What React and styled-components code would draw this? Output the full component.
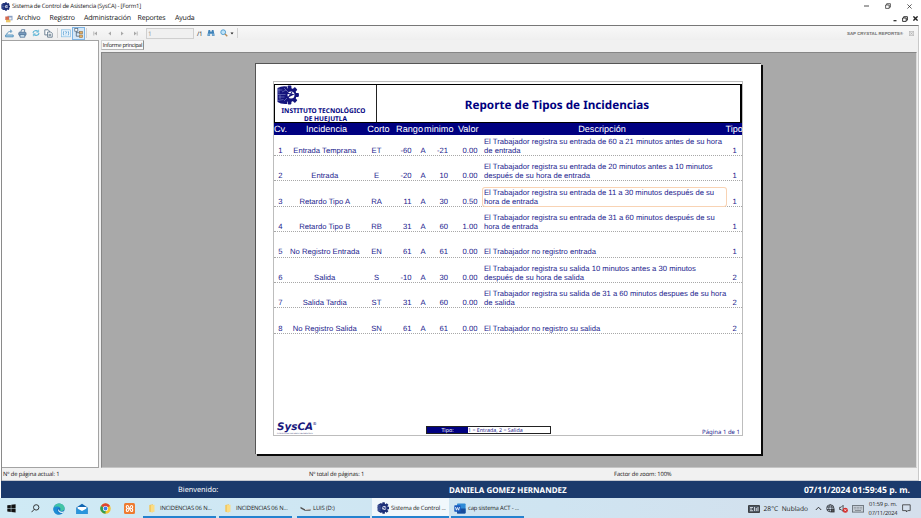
import React from "react";
import styled, { createGlobalStyle } from "styled-components";

const SEGOE = '"Open Sans", "Noto Sans", sans-serif';
const TAHOMA = '"Noto Sans", "DejaVu Sans", sans-serif';
const ARIAL = '"Liberation Sans", Arial, sans-serif';

const Global = createGlobalStyle`
  *, *::before, *::after { box-sizing: border-box; }
  body { margin: 0; overflow: hidden; background: #fff; }
  svg { display: block; flex: none; }
`;

const Screen = styled.div`
  width: 921px;
  height: 518px;
  display: flex;
  flex-direction: column;
  background: #fff;
  font-family: ${SEGOE};
  font-size: 6.6px;
  color: #222;
  white-space: nowrap;
  overflow: hidden;
  text-rendering: geometricPrecision;
`;

const Text = styled.span`
  font-family: ${(p) => p.$font || "inherit"};
  font-size: ${(p) => p.$size || 6.6}px;
  font-weight: ${(p) => (p.$bold ? 700 : 400)};
  letter-spacing: ${(p) => p.$track || 0}px;
  color: ${(p) => p.$color || "inherit"};
  white-space: nowrap;
`;

/* ---------- window chrome ---------- */
const TitleBar = styled.header`
  height: 12px;
  flex: none;
  display: flex;
  align-items: center;
  padding: 0 9px 0 1px;
  gap: 2px;
`;
const WindowButtons = styled.div`
  margin-left: auto;
  display: flex;
  align-items: center;
  gap: ${(p) => p.$gap}px;
`;
const MenuBar = styled.nav`
  height: 13px;
  flex: none;
  display: flex;
  align-items: center;
  padding: 0 3px 0 5px;
`;
const MenuItem = styled.span`
  font-size: 7px;
  letter-spacing: -0.17px;
  color: #111;
  width: ${(p) => p.$width}px;
  &:first-of-type { margin-left: 4px; }
`;
const Client = styled.main`
  height: 456px;
  flex: none;
  display: flex;
  flex-direction: column;
  margin: 0 2px 0 1px;
  border-top: 1px solid #777;
  border-left: 1px solid #8a8a8a;
  border-right: 1px solid #c9c9c9;
  background: #f1f1f1;
`;
const Toolbar = styled.div`
  height: 14px;
  flex: none;
  display: flex;
  align-items: center;
  padding: 0 4px 0 1px;
  background: linear-gradient(#f8f8f8, #efefef);
`;
const ToolButton = styled.span`
  width: ${(p) => p.$width || 13}px;
  height: 13px;
  flex: none;
  display: flex;
  align-items: center;
  justify-content: center;
  border: 1px solid ${(p) => (p.$on ? "#7db3e3" : "transparent")};
  background: ${(p) => (p.$on ? "#d5e8f8" : "transparent")};
`;
const Separator = styled.span`
  width: 1px;
  height: 10px;
  margin: 0 ${(p) => p.$gap || 0}px;
  background: #d2d2d2;
`;
const PageInput = styled.span`
  width: 48px;
  height: 11px;
  margin: 0 3px 0 4px;
  padding-left: 1px;
  border: 1px solid #cfcfcf;
  background: #f0f0f0;
  color: #8d8d8d;
  font-size: 6.4px;
  line-height: 9px;
`;
const Brand = styled.div`
  margin-left: auto;
  display: flex;
  align-items: center;
  gap: 6px;
`;
const Workspace = styled.div`
  height: 428px;
  flex: none;
  display: flex;
  gap: 2px;
`;
const TreePanel = styled.aside`
  width: 97px;
  background: #fff;
  border: 1px solid #a3a3a3;
  border-left: 0;
`;
const Viewer = styled.section`
  flex: 1;
  display: flex;
  flex-direction: column;
  padding-right: 1px;
`;
const Tabs = styled.div`
  height: 12px;
  display: flex;
  align-items: flex-start;
`;
const Tab = styled.div`
  width: 43px;
  height: 10px;
  display: flex;
  align-items: center;
  justify-content: center;
  border: 1px solid #d6d6d6;
  border-right-color: #8e8e8e;
  border-bottom-color: #b5b5b5;
  background: #fafafa;
  color: #111;
`;
const Canvas = styled.div`
  flex: 1;
  padding: 10px 0 0 153px;
  background: #a9a9a9;
  border-top: 1px solid #868686;
  border-left: 1px solid #868686;
  border-right: 1px solid #dcdcdc;
  border-bottom: 1px solid #c5c5c5;
`;
const StatusBar = styled.footer`
  flex: 1;
  display: flex;
  align-items: center;
  padding-left: 1px;
  border-bottom: 1px solid #c4c8d0;
  color: #111;
`;
const StatusCell = styled.span`
  width: ${(p) => p.$width}px;
  font-size: 5.8px;
  letter-spacing: -0.1px;
  line-height: 8px;
`;

/* ---------- report page ---------- */
const Sheet = styled.article`
  width: 506px;
  height: 391px;
  padding: 17px 0 0 17px;
  background: #fff;
  border: 1px solid #555;
  border-width: 1px 0 0 1px;
  box-shadow: 2px 2px 0 #0a0a0a;
  font-family: ${ARIAL};
  color: #23238e;
`;
const Frame = styled.div`
  width: 470px;
  height: 355px;
  display: flex;
  flex-direction: column;
  padding-top: 2px;
  border: 1px solid #bdbdbd;
`;
const Masthead = styled.div`
  height: 39px;
  flex: none;
  display: flex;
  border: 1px solid #000;
  border-right-width: 2px;
`;
const Institute = styled.div`
  width: 102px;
  display: flex;
  flex-direction: column;
  align-items: center;
  border-right: 1px solid #222;
  color: #000080;
`;
const LogoSlot = styled.div`
  height: 21px;
  align-self: flex-start;
  padding-left: 1px;
`;
const InstituteLine = styled.div`
  height: 8px;
  padding: 0 ${(p) => p.$trail}px 0 0;
  font: 700 6.5px/9px ${TAHOMA};
`;
const ReportTitle = styled.h1`
  flex: 1;
  margin: 0;
  padding: 2px 3px 0 0;
  display: flex;
  align-items: center;
  justify-content: center;
  font: 700 11.7px/12px ${TAHOMA};
  color: #000080;
`;
const HeadRow = styled.div`
  height: 12px;
  flex: none;
  display: grid;
  grid-template-columns: 13px 79px 25px 32px 30.5px 25px 247px 1fr;
  align-items: center;
  background: #000080;
  color: #fff;
  font-size: 9.15px;
  line-height: 11px;
`;
const HeadCell = styled.span`
  text-align: ${(p) => p.$align || "center"};
`;
const Row = styled.div`
  height: ${(p) => (p.$first ? 21 : 25.4)}px;
  flex: none;
  display: grid;
  grid-template-columns: 13px 75.5px 28px 21px 23px 13.5px 29.5px 250px 14.5px;
  align-items: end;
  margin-right: 0;
  padding-bottom: 0.2px;
  border-bottom: 1px dotted #a8a8a8;
  font-size: 7.67px;
  line-height: 9px;
`;
const Cell = styled.span`
  text-align: ${(p) => p.$align || "center"};
`;
const Description = styled.span`
  margin: 0 2px 0 5.5px;
  padding-left: 1px;
  border-radius: 2px;
  white-space: pre;
  box-shadow: ${(p) => (p.$marked ? "0 0 0 1px #f8d3b4" : "none")};
`;
const SheetFooter = styled.div`
  margin-top: auto;
  height: 14px;
  display: flex;
  align-items: flex-start;
  padding: 0 2px 0 3px;
  font-family: ${TAHOMA};
`;
const SysBrand = styled.div`
  width: 149px;
  height: 14px;
  display: flex;
  flex-direction: column;
  justify-content: flex-end;
`;
const SysName = styled.div`
  display: flex;
  height: 11px;
  font: italic 700 10.4px/11px "DejaVu Sans", sans-serif;
  color: #17177c;
`;
const Registered = styled.span`
  font: 400 4px/5px ${TAHOMA};
`;
const SysTag = styled.div`
  font: 400 1.9px/2px ${TAHOMA};
  color: #333366;
`;
const Legend = styled.div`
  width: 125px;
  height: 8px;
  margin-top: 5px;
  display: flex;
  border: 1px solid #222;
  font-size: 5.3px;
  line-height: 6px;
`;
const LegendKey = styled.span`
  width: 41px;
  background: #000080;
  color: #fff;
  text-align: center;
`;
const PageNumber = styled.div`
  margin: 6.5px 0 0 auto;
  font-size: 6px;
  line-height: 9px;
`;

/* ---------- welcome bar and taskbar ---------- */
const WelcomeBar = styled.div`
  height: 17px;
  flex: none;
  display: grid;
  grid-template-columns: 177px 271px 1fr auto;
  align-items: center;
  margin-left: 1px;
  padding: 1px 11px 0 0;
  background: #1b3a6c;
  color: #fff;
  font-family: ${TAHOMA};
`;
const Taskbar = styled.div`
  height: 20px;
  flex: none;
  display: flex;
  padding-left: 1px;
  background: linear-gradient(90deg, #cfeaf5, #cfe4f1 60%, #d5dfec);
  color: #222;
`;
const Pinned = styled.div`
  width: 142px;
  display: flex;
  align-items: center;
  padding: 1px 0 0 6px;
`;
const PinnedIcon = styled.span`
  width: ${(p) => p.$width}px;
`;
const Task = styled.div`
  width: ${(p) => p.$width || 73}px;
  margin-right: ${(p) => p.$gap}px;
  display: flex;
  align-items: center;
  gap: ${(p) => p.$space}px;
  padding: 2px 0 0 ${(p) => p.$pad}px;
  border-bottom: 2px solid #2482cf;
  background: ${(p) => (p.$active ? "#f1f8fc" : "transparent")};
`;
const TaskLabel = styled.span`
  font-size: 5.9px;
  letter-spacing: -0.16px;
`;
const Tray = styled.div`
  margin-left: auto;
  display: flex;
  align-items: center;
  padding: 1px 10px 0 0;
  gap: 4px;
`;
const Weather = styled.div`
  display: flex;
  align-items: center;
  gap: 3.5px;
  margin-right: 3px;
`;
const Clock = styled.div`
  width: 30px;
  text-align: center;
  font-size: 5.7px;
  line-height: 8.3px;
  letter-spacing: -0.12px;
`;

/* ---------- drawings ---------- */
const teeth = [0, 45, 90, 135, 180, 225, 270, 315];
const Gear = ({ size, color = "#1c2f77" }) => (
  <svg width={size} height={size} viewBox="0 0 20 20">
    <g fill={color}>
      <circle cx="11" cy="10" r="7" />
      {teeth.map((a) => (
        <rect key={a} x="8.8" y="0.6" width="4.4" height="4" rx=".8" transform={`rotate(${a} 11 10)`} />
      ))}
      <path d="M1 5Q4 2 9 2v16Q4 18 1 15z" />
    </g>
    <circle cx="12" cy="10" r="3.4" fill="#e8edf8" />
    <path d="M9.5 8.8l5 1.2-4 2" stroke={color} strokeWidth="1.3" fill="none" />
    <path d="M1 6.500h5M1 10h6M1 13.500h5" stroke="#8b9ad0" strokeWidth=".9" />
  </svg>
);
const InstituteLogo = () => (
  <svg width="23" height="20" viewBox="0 0 23 20">
    <g fill="#14147c">
      <circle cx="13.5" cy="10" r="7" />
      {teeth.map((a) => (
        <rect key={a} x="11.6" y="0.6" width="3.8" height="4" rx=".8" transform={`rotate(${a} 13.5 10)`} />
      ))}
      <path d="M1.5 3Q6 .5 11 1.5v17.500Q5 19.500 1.500 17z" />
    </g>
    <circle cx="15" cy="10" r="3.5" fill="#fff" />
    <path d="M10 8l7 1.5-6 3M12 13l4-6" stroke="#14147c" strokeWidth="1.1" fill="none" />
    <path d="M1.500 5h5M3 3.500v5M6 7l4-2M1.500 9.500h8M2.500 12h6M4 10v4M1.500 15.500l6-1M8 3l4 4M8 16l3-3" stroke="#9aa2d8" strokeWidth=".5" fill="none" />
  </svg>
);
const Minimize = ({ bold }) => (
  <svg width="5" height="8" viewBox="0 0 5 8"><path d={bold ? "M1.5 5.7h3" : "M0 4h5"} stroke="#222" strokeWidth={bold ? 1.2 : 0.8} /></svg>
);
const Restore = ({ bold }) => (
  <svg width="6" height="6" viewBox="0 0 6 6" fill="none" stroke="#222" strokeWidth={bold ? 0.9 : 0.7}>
    <path d="M.6 2h3.6v3.4H.6zM1.7 2V.7h3.7v3.5H4.2" />
  </svg>
);
const Close = ({ bold }) => (
  <svg width="5" height="5" viewBox="0 0 5 5"><path d="M.4.4l4.2 4.2M4.6.4L.4 4.6" stroke="#222" strokeWidth={bold ? 1.4 : 0.7} /></svg>
);
const FormIcon = () => (
  <svg width="8" height="8" viewBox="0 0 8 8">
    <rect x="2.5" y=".8" width="5" height="4.5" fill="#8aa1c5" /><rect x=".3" y="1.5" width="3.7" height="3.5" fill="#d56a50" />
    <rect x="1" y="4.8" width="4.5" height="2.5" fill="#ecc667" /><rect x="4.2" y="2.5" width="2.3" height="2" fill="#f5f5f5" />
  </svg>
);
const ExportIcon = () => (
  <svg width="9" height="9" viewBox="0 0 9 9" fill="none" stroke="#4c8cb9" strokeWidth=".9">
    <path d="M.6 6v1.8h7.6V6z" fill="#bcdcf0" /><path d="M1.5 5.5C2.5 3 4 2.5 6 2.3M5 .8l2 1.5-1.5 1.6" />
  </svg>
);
const PrintIcon = () => (
  <svg width="9" height="9" viewBox="0 0 9 9" stroke="#4a6f94" strokeWidth=".8">
    <path d="M2.8 3.2L3.6.7h3.2l-.6 2.5" fill="#fff" /><rect x=".8" y="3.2" width="7.2" height="3.2" rx=".8" fill="#789bbd" /><path d="M2 5.6h4.8v2.6H2z" fill="#cfe6f5" />
  </svg>
);
const RefreshIcon = () => (
  <svg width="8" height="8" viewBox="0 0 8 8" fill="none" stroke="#5db5d6" strokeWidth="1.2">
    <path d="M1 3.8C1.3 1.8 4.3.8 6 2.5M7 4.2C6.7 6.3 3.7 7.2 2 5.5" /><path d="M6.6.8v2.4H4.4M1.4 7.2V4.8h2.2" strokeWidth=".8" />
  </svg>
);
const CopyIcon = () => (
  <svg width="9" height="9" viewBox="0 0 9 9" fill="#fff" stroke="#536b80" strokeWidth=".8">
    <path d="M.8.8h3.4l1.2 1.3v3.8H.8z" /><path d="M3.6 3h3.2l1.4 1.4v3.8H3.6zM4.6 5.3h2.4M4.6 6.7h2.4" />
  </svg>
);
const ParamIcon = () => (
  <svg width="10" height="9" viewBox="0 0 10 9" fill="none" stroke="#4592cb" strokeWidth=".7">
    <rect x=".5" y=".8" width="9" height="7" fill="#eaf5fd" stroke="#84bce3" /><path d="M2.8 2.2q-1 2 0 4.2M7.2 2.2q1 2 0 4.2M4.1 3q.8-1 1.6 0 0 .8-.8 1.2v.6M4.9 5.7v.7" />
  </svg>
);
const TreeIcon = () => (
  <svg width="10" height="10" viewBox="0 0 10 10">
    <path d="M2.3 2.5v5.7H6M2.3 4.7H6" stroke="#4c6175" strokeWidth=".8" fill="none" />
    <rect x=".8" y=".6" width="3" height="2.6" fill="#fff" stroke="#4c6175" strokeWidth=".7" />
    <rect x="5.6" y="3.4" width="3" height="2.4" fill="#e8b061" stroke="#8c7350" strokeWidth=".6" />
    <rect x="5.6" y="7" width="3" height="2.4" fill="#e8b061" stroke="#8c7350" strokeWidth=".6" />
  </svg>
);
const NavIcon = ({ back, end }) => (
  <svg width="5" height="5" viewBox="0 0 5 5" transform={back ? "scale(-1 1)" : undefined}>
    <path d="M1 .5l2.6 2L1 4.5z" fill="#a8a8a8" />{end && <path d="M4.2.5v4" stroke="#a8a8a8" strokeWidth=".8" />}
  </svg>
);
const FindIcon = () => (
  <svg width="8" height="8" viewBox="0 0 8 8"><path d="M1.5 1h1.7v1.6h1.6V1h1.7l1.2 5.8H4.9V4.8H3.1v2H.3z" fill="#3f82b9" /><path d="M.9 5.2h2M5.2 5.2h2" stroke="#a9d4ef" strokeWidth=".8" /></svg>
);
const ZoomIcon = () => (
  <svg width="8" height="8" viewBox="0 0 8 8"><circle cx="3.2" cy="3.2" r="2.4" fill="#bfe2f7" stroke="#4a9ace" strokeWidth=".9" /><path d="M5 5l2.3 2.3" stroke="#b58a57" strokeWidth="1.3" /></svg>
);
const CaretIcon = () => <svg width="4" height="3" viewBox="0 0 4 3"><path d="M.5.5h3L2 2.4z" fill="#222" /></svg>;
const CloseBox = () => (
  <svg width="5" height="5" viewBox="0 0 5 5"><rect x=".3" y=".3" width="4.4" height="4.4" fill="#e5e5e5" stroke="#b5b5b5" strokeWidth=".6" /><path d="M1.4 1.4l2.2 2.2M3.6 1.4L1.4 3.6" stroke="#aaa" strokeWidth=".6" /></svg>
);
const StartIcon = () => (
  <svg width="9" height="9" viewBox="0 0 9 9"><path d="M.3 1.3L3.8.9v3.3H.3zM4.3.8L8.6.3v3.9H4.3zM.3 4.7h3.5V8L.3 7.6zM4.3 4.7h4.3v3.9l-4.3-.5z" fill="#111" /></svg>
);
const SearchIcon = () => (
  <svg width="9" height="9" viewBox="0 0 9 9" fill="none" stroke="#222" strokeWidth=".9"><circle cx="5.2" cy="3.4" r="2.7" /><path d="M3.2 5.4L.5 8.2" /></svg>
);
const EdgeIcon = () => (
  <svg width="12" height="12" viewBox="0 0 12 12">
    <circle cx="6" cy="6" r="5.6" fill="#1673c4" />
    <path d="M.5 5.5C1 2.2 3.4.4 6.1.4c3.2 0 5.5 2.3 5.5 4.8 0 1.8-1.4 2.8-3 2.8-1 0-1.8-.4-1.4-1.1.7-1.3-.1-2.8-2-2.9C3 3.8 1.2 4.3.5 5.5z" fill="#42c5a5" />
    <path d="M.5 5.5C2 3 6 3.2 6.8 4.8 4.5 4.5 3.7 6.4 4.3 8c.5 1.5 2 2.7 4.2 2.7C4.5 13 .2 10.2.5 5.5z" fill="#1d8dd5" />
    <path d="M6.9 8c1 .9 3 .8 4.4.1L10 10C6.500 10.300 4.300 8 5.300 6c.3 1 .8 1.600 1.600 2z" fill="#d8f0f8" />
  </svg>
);
const MailIcon = () => (
  <svg width="12" height="12" viewBox="0 0 12 12"><path d="M.4 4.5L6 .8l5.6 3.7v6.4H.4z" fill="#0f65b1" /><path d="M1.5 4h9v3L6 8.5 1.5 7z" fill="#fff" /><path d="M.4 5l5.6 3 5.6-3v6H.4z" fill="#2995dc" /></svg>
);
const ChromeIcon = () => (
  <svg width="11" height="11" viewBox="0 0 12 12">
    <circle cx="6" cy="6" r="5.7" fill="#f4c32f" /><path d="M6 6L1.06 3.15A5.7 5.7 0 0 1 10.94 3.15z" fill="#dc4435" />
    <path d="M6 6L1.06 3.15A5.7 5.7 0 0 0 6 11.7z" fill="#2e9e56" />
    <circle cx="6" cy="6" r="2.8" fill="#fff" /><circle cx="6" cy="6" r="2.1" fill="#3e7fe8" />
  </svg>
);
const XamppIcon = () => (
  <svg width="11" height="11" viewBox="0 0 11 11"><rect width="11" height="11" rx="1.5" fill="#ee7b30" /><path d="M3.5 2.5C1.8 2.5 2 5 3.5 5.5 1.8 6 2 8.5 3.5 8.5S4.5 5.5 5.5 5.5 6 8.5 7.5 8.5 9.2 6 7.5 5.5C9.2 5 9 2.5 7.5 2.5S6.5 5.5 5.5 5.5 5 2.5 3.5 2.5z" fill="none" stroke="#fff" strokeWidth="1.1" /></svg>
);
const FolderIcon = () => (
  <svg width="6" height="9" viewBox="0 0 6 9"><path d="M.3 1L4 .3v8L.3 7.7z" fill="#f1c558" /><path d="M1.8 1.2l3.7-.4v7l-3.7.7z" fill="#fbdc83" /></svg>
);
const DriveIcon = () => (
  <svg width="11" height="7" viewBox="0 0 11 7"><path d="M.5 1.8l4 2.2h6v1.8H4.8L.5 3.4z" fill="#555" /><path d="M5 4l5.5-.4v1L5 5z" fill="#ddd" /></svg>
);
const WordIcon = () => (
  <svg width="12" height="11" viewBox="0 0 12 11"><rect x="3" y=".4" width="8.6" height="10" rx=".8" fill="#2e8ad6" /><path d="M3 5.5h8.6v4.3q0 .6-.6.6H3z" fill="#174d9c" /><rect x=".3" y="2.3" width="6.4" height="6.4" rx=".6" fill="#185abd" /><path d="M1.5 4l.9 3.2L3.5 4.5l1.1 2.7L5.5 4" stroke="#fff" strokeWidth=".8" fill="none" /></svg>
);
const NewsIcon = () => (
  <svg width="12" height="8" viewBox="0 0 12 8"><rect x=".4" y=".4" width="11.2" height="7.2" rx=".6" fill="#4d5560" stroke="#222" strokeWidth=".8" /><path d="M2 2.5h3M2 4h2M2 5.7h3M6.5 2v4M8.3 3v3M10 2v4" stroke="#e8eef3" strokeWidth=".8" /></svg>
);
const ChevronIcon = () => <svg width="7" height="5" viewBox="0 0 7 5"><path d="M.8 4L3.5 1.2 6.2 4" fill="none" stroke="#222" strokeWidth=".9" /></svg>;
const GlobeIcon = () => (
  <svg width="9" height="9" viewBox="0 0 9 9" fill="none" stroke="#2b2f35" strokeWidth=".8"><circle cx="4.3" cy="4.3" r="3.6" /><path d="M.8 3h7M.8 5.6h4M4.3.7c-2 2-2 5.3 0 7.2M4.3.7c1.5 1 1.8 3 1.6 4" /><rect x="5.3" y="5.2" width="2.8" height="2.8" fill="#555" /></svg>
);
const MutedIcon = () => (
  <svg width="9" height="9" viewBox="0 0 9 9"><path d="M.6 3.3h1.5l2-2v6.2l-2-2H.6z" fill="none" stroke="#333" strokeWidth=".8" /><circle cx="6.3" cy="6.2" r="2.5" fill="#d32c2c" /><path d="M5.3 5.2l2 2M7.3 5.2l-2 2" stroke="#fff" strokeWidth=".7" /></svg>
);
const KeyboardIcon = () => (
  <svg width="12" height="8" viewBox="0 0 12 8"><rect x=".4" y=".6" width="11.2" height="6.5" fill="#c9d0d8" stroke="#5d646c" strokeWidth=".8" /><path d="M1.8 2.4h8.4M1.8 3.9h8.4" stroke="#6c737b" strokeWidth=".7" strokeDasharray=".9 .6" /><path d="M3 5.5h6" stroke="#6c737b" strokeWidth=".7" /></svg>
);
const NoticeIcon = () => <svg width="9" height="9" viewBox="0 0 9 9"><path d="M.6.8h7.6v5.8H5.7L4.4 8V6.6H.6z" fill="none" stroke="#333" strokeWidth=".8" /></svg>;

/* ---------- data ---------- */
const menu = [["Archivo", 32.5], ["Registro", 34.5], ["Administración", 53.5], ["Reportes", 37.5], ["Ayuda", 30]];
const rows = [
  ["1", "Entrada Temprana", "ET", "-60", "-21", "0.00", "El Trabajador registra su entrada de 60 a 21 minutos antes de su hora\nde entrada", "1"],
  ["2", "Entrada", "E", "-20", "10", "0.00", "El Trabajador registra su entrada de 20 minutos antes a 10 minutos\ndespués de su hora de entrada", "1"],
  ["3", "Retardo Tipo A", "RA", "11", "30", "0.50", "El Trabajador registra su entrada de 11 a 30 minutos después de su\nhora de entrada", "1"],
  ["4", "Retardo Tipo B", "RB", "31", "60", "1.00", "El Trabajador registra su entrada de 31 a 60 minutos después de su\nhora de entrada", "1"],
  ["5", "No Registro Entrada", "EN", "61", "61", "0.00", "El Trabajador no registro entrada", "1"],
  ["6", "Salida", "S", "-10", "30", "0.00", "El Trabajador registra su salida 10 minutos antes a 30 minutos\ndespués de su hora de salida", "2"],
  ["7", "Salida Tardia", "ST", "31", "60", "0.00", "El Trabajador registra su salida de 31 a 60 minutos despues de su hora\nde salida", "2"],
  ["8", "No Registro Salida", "SN", "61", "61", "0.00", "El Trabajador no registro su salida", "2"],
];

const ReportRow = ({ data, first, marked }) => {
  const [cv, name, short, from, to, value, text, kind] = data;
  return (
    <Row $first={first}>
      <Cell>{cv}</Cell>
      <Cell>{name}</Cell>
      <Cell>{short}</Cell>
      <Cell $align="right">{from}</Cell>
      <Cell>A</Cell>
      <Cell $align="right">{to}</Cell>
      <Cell $align="right">{value}</Cell>
      <Description $marked={marked}>{text}</Description>
      <Cell>{kind}</Cell>
    </Row>
  );
};

const Report = () => (
  <Sheet>
    <Frame>
      <Masthead>
        <Institute>
          <LogoSlot><InstituteLogo /></LogoSlot>
          <InstituteLine $trail={4}>INSTITUTO TECNOLÓGICO</InstituteLine>
          <InstituteLine $trail={0}>DE HUEJUTLA</InstituteLine>
        </Institute>
        <ReportTitle>Reporte de Tipos de Incidencias</ReportTitle>
      </Masthead>
      <HeadRow>
        <HeadCell $align="left">Cv.</HeadCell>
        <HeadCell>Incidencia</HeadCell>
        <HeadCell>Corto</HeadCell>
        <HeadCell $align="right">Rango</HeadCell>
        <HeadCell $align="right">minimo</HeadCell>
        <HeadCell $align="right">Valor</HeadCell>
        <HeadCell>Descripción</HeadCell>
        <HeadCell $align="right">Tipo</HeadCell>
      </HeadRow>
      {rows.map((r, i) => <ReportRow key={r[0]} data={r} first={i === 0} marked={i === 2} />)}
      <SheetFooter>
        <SysBrand>
          <SysName>SysCA<Registered>®</Registered></SysName>
          <SysTag>CONTROL DE ASISTENCIA DE PERSONAL</SysTag>
        </SysBrand>
        <Legend><LegendKey>Tipo:</LegendKey><span>1 = Entrada, 2 = Salida</span></Legend>
        <PageNumber>Página 1 de 1</PageNumber>
      </SheetFooter>
    </Frame>
  </Sheet>
);

export default function App() {
  return (
    <Screen>
      <Global />
      <TitleBar>
        <Gear size={9} />
        <Text $size={6} $track={-0.22} $color="#222">Sistema de Control de Asistencia (SysCA) - [Form1]</Text>
        <WindowButtons $gap={16}><Minimize /><Restore /><Close /></WindowButtons>
      </TitleBar>
      <MenuBar>
        <FormIcon />
        {menu.map(([label, width]) => <MenuItem key={label} $width={width}>{label}</MenuItem>)}
        <WindowButtons $gap={5}><Minimize bold /><Restore bold /><Close bold /></WindowButtons>
      </MenuBar>
      <Client>
        <Toolbar>
          <ToolButton><ExportIcon /></ToolButton>
          <ToolButton><PrintIcon /></ToolButton>
          <ToolButton><RefreshIcon /></ToolButton>
          <ToolButton><CopyIcon /></ToolButton>
          <Separator $gap={2} />
          <ToolButton $width={12}><ParamIcon /></ToolButton>
          <ToolButton $on><TreeIcon /></ToolButton>
          <Separator $gap={1} />
          <ToolButton $width={14}><NavIcon back end /></ToolButton>
          <ToolButton $width={14}><NavIcon back /></ToolButton>
          <ToolButton><NavIcon /></ToolButton>
          <ToolButton><NavIcon end /></ToolButton>
          <PageInput>1</PageInput>
          <Text $size={6.3} $track={-0.2}>/1</Text>
          <ToolButton $width={16}><FindIcon /></ToolButton>
          <ToolButton $width={11}><ZoomIcon /></ToolButton>
          <CaretIcon />
          <Separator $gap={3} />
          <Brand><Text $size={4.4} $bold $color="#707070" $font={ARIAL}>SAP CRYSTAL REPORTS®</Text><CloseBox /></Brand>
        </Toolbar>
        <Workspace>
          <TreePanel />
          <Viewer>
            <Tabs><Tab><Text $size={5.6} $track={-0.32}>Informe principal</Text></Tab></Tabs>
            <Canvas><Report /></Canvas>
          </Viewer>
        </Workspace>
        <StatusBar>
          <StatusCell $width={306}>Nº de página actual: 1</StatusCell>
          <StatusCell $width={305}>Nº total de páginas: 1</StatusCell>
          <StatusCell $width={200}>Factor de zoom: 100%</StatusCell>
        </StatusBar>
      </Client>
      <WelcomeBar>
        <span />
        <Text $size={7.3}>Bienvenido:</Text>
        <Text $size={8} $bold>DANIELA GOMEZ HERNANDEZ</Text>
        <Text $size={8.6} $bold>07/11/2024 01:59:45 p. m.</Text>
      </WelcomeBar>
      <Taskbar>
        <Pinned>
          <PinnedIcon $width={24}><StartIcon /></PinnedIcon>
          <PinnedIcon $width={22}><SearchIcon /></PinnedIcon>
          <PinnedIcon $width={23}><EdgeIcon /></PinnedIcon>
          <PinnedIcon $width={24}><MailIcon /></PinnedIcon>
          <PinnedIcon $width={24}><ChromeIcon /></PinnedIcon>
          <XamppIcon />
        </Pinned>
        <Task $pad={6} $space={5} $gap={3}><FolderIcon /><TaskLabel>INCIDENCIAS 06 N...</TaskLabel></Task>
        <Task $pad={6} $space={5} $gap={5}><FolderIcon /><TaskLabel>INCIDENCIAS 06 N...</TaskLabel></Task>
        <Task $pad={3} $space={2} $gap={2}><DriveIcon /><TaskLabel>LUIS (D:)</TaskLabel></Task>
        <Task $pad={5} $space={2} $gap={2} $width={77} $active><Gear size={12} /><TaskLabel>Sistema de Control ...</TaskLabel></Task>
        <Task $pad={3} $space={2} $gap={0}><WordIcon /><TaskLabel>cap sistema ACT - ...</TaskLabel></Task>
        <Tray>
          <Weather>
            <NewsIcon />
            <Text $size={6.6}>28°C</Text>
            <Text $size={6.6}>Nublado</Text>
          </Weather>
          <ChevronIcon />
          <GlobeIcon />
          <MutedIcon />
          <KeyboardIcon />
          <Clock>01:59 p. m.<br />07/11/2024</Clock>
          <NoticeIcon />
        </Tray>
      </Taskbar>
    </Screen>
  );
}
